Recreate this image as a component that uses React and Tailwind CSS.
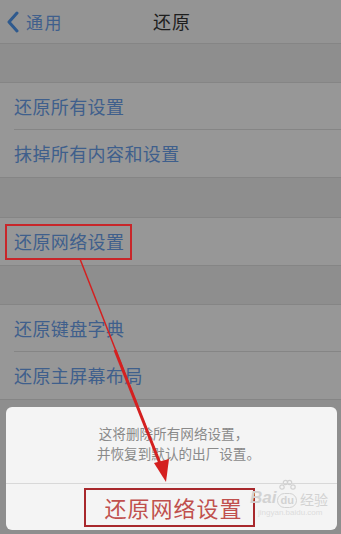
import React from "react";

const font = { fontFamily: '"Noto Sans CJK SC", "Noto Sans", sans-serif' };

function Row({ children, sep, boxed }) {
  return (
    <div className="h-[47px] flex flex-col">
      <div className="flex-1 flex items-center pl-[14px]">
        <span className={"text-[18px] text-[#3f5f8c] tracking-[0.4px] " + (boxed ? "relative" : "")}>
          {children}
          {boxed && (
            <span className="absolute left-[-9px] right-[-8px] top-[-4px] bottom-[-5px] border-2 border-[#c8262a]" />
          )}
        </span>
      </div>
      {sep && <div className="h-px bg-[#858585] ml-[14px]" />}
    </div>
  );
}

export default function App() {
  return (
    <div className="relative w-[341px] h-[534px] overflow-hidden bg-[#8e8e8e]" style={font}>
      <div className="relative h-[44px] bg-[#949494] border-b border-[#858585] flex items-center">
        <div className="flex items-center pl-[6px] gap-[6px]">
          <svg width="14" height="22" viewBox="0 0 14 22">
            <path d="M11 2 L3 11 L11 20" fill="none" stroke="#2f5a8e" strokeWidth="3" strokeLinecap="round" strokeLinejoin="round" />
          </svg>
          <span className="text-[17px] text-[#3f5f8c] tracking-[1.5px]">通用</span>
        </div>
        <div className="absolute inset-0 flex items-center justify-center">
          <span className="text-[18px] text-[#1e1e1e] tracking-[1px] pl-[3px]">还原</span>
        </div>
      </div>
      <div className="h-[38px]" />
      <div className="bg-[#979797] border-y border-[#858585]">
        <Row sep>还原所有设置</Row>
        <Row>抹掉所有内容和设置</Row>
      </div>
      <div className="h-[39px]" />
      <div className="bg-[#979797] border-y border-[#858585]">
        <Row boxed>还原网络设置</Row>
      </div>
      <div className="h-[38px]" />
      <div className="bg-[#979797] border-y border-[#858585]">
        <Row sep>还原键盘字典</Row>
        <Row>还原主屏幕布局</Row>
      </div>

      {/* action sheet */}
      <div className="absolute left-[6px] right-[4px] top-[407px] h-[123px] bg-[#f4f4f4] rounded-[6px] flex flex-col">
        <div className="h-[76px] flex flex-col items-center justify-center text-[13.6px] leading-[20px] text-[#8a8a8a] pb-[5px]">
          <span className="pl-[4px]">这将删除所有网络设置，</span>
          <span className="pl-[14px]">并恢复到默认的出厂设置。</span>
        </div>
        <div className="h-px bg-[#d8d8d8]" />
        <div className="flex-1 flex items-center justify-center">
          <span className="relative text-[22px] text-[#c0504d] tracking-[1px] pl-[4px]">
            还原网络设置
            <span className="absolute left-[-16px] right-[-12px] top-[-3px] bottom-[-3px] border-2 border-[#a8282c]" />
          </span>
        </div>
        {/* watermark */}
        <div className="absolute left-[244px] top-[72px] flex flex-col items-start pointer-events-none">
          <div className="flex items-end gap-[1px] text-[#d2d2d2]">
            <span className="text-[17px] font-bold italic leading-[20px]" style={{ fontFamily: '"Liberation Sans", sans-serif' }}>Bai</span>
            <div className="flex flex-col items-center">
              <svg width="18" height="14" viewBox="0 0 18 14">
                <circle cx="4" cy="8" r="2.2" fill="none" stroke="#d2d2d2" strokeWidth="1.2" />
                <circle cx="7.5" cy="3.5" r="2.2" fill="none" stroke="#d2d2d2" strokeWidth="1.2" />
                <circle cx="11.5" cy="3.5" r="2.2" fill="none" stroke="#d2d2d2" strokeWidth="1.2" />
                <circle cx="15" cy="8" r="2.2" fill="none" stroke="#d2d2d2" strokeWidth="1.2" />
              </svg>
              <span className="text-[11px] font-bold rounded-full border border-[#d2d2d2] px-[2px] leading-[13px]" style={{ fontFamily: '"Liberation Sans", sans-serif' }}>du</span>
            </div>
            <span className="text-[14px] leading-[18px] ml-[2px]">经验</span>
          </div>
          <span className="text-[8px] leading-[10px] text-[#dcdcdc] ml-[8px]" style={{ fontFamily: '"Liberation Sans", sans-serif' }}>jingyan.baidu.com</span>
        </div>
      </div>

      {/* arrow */}
      <svg className="absolute left-0 top-0 pointer-events-none" width="341" height="534">
        <line x1="80" y1="259" x2="161" y2="466" stroke="#d42020" strokeWidth="1.5" />
        <line x1="115" y1="350" x2="161" y2="466" stroke="#d42020" strokeWidth="3" />
        <polygon points="166,482 154,463 169,459" fill="#d42020" />
      </svg>
    </div>
  );
}
